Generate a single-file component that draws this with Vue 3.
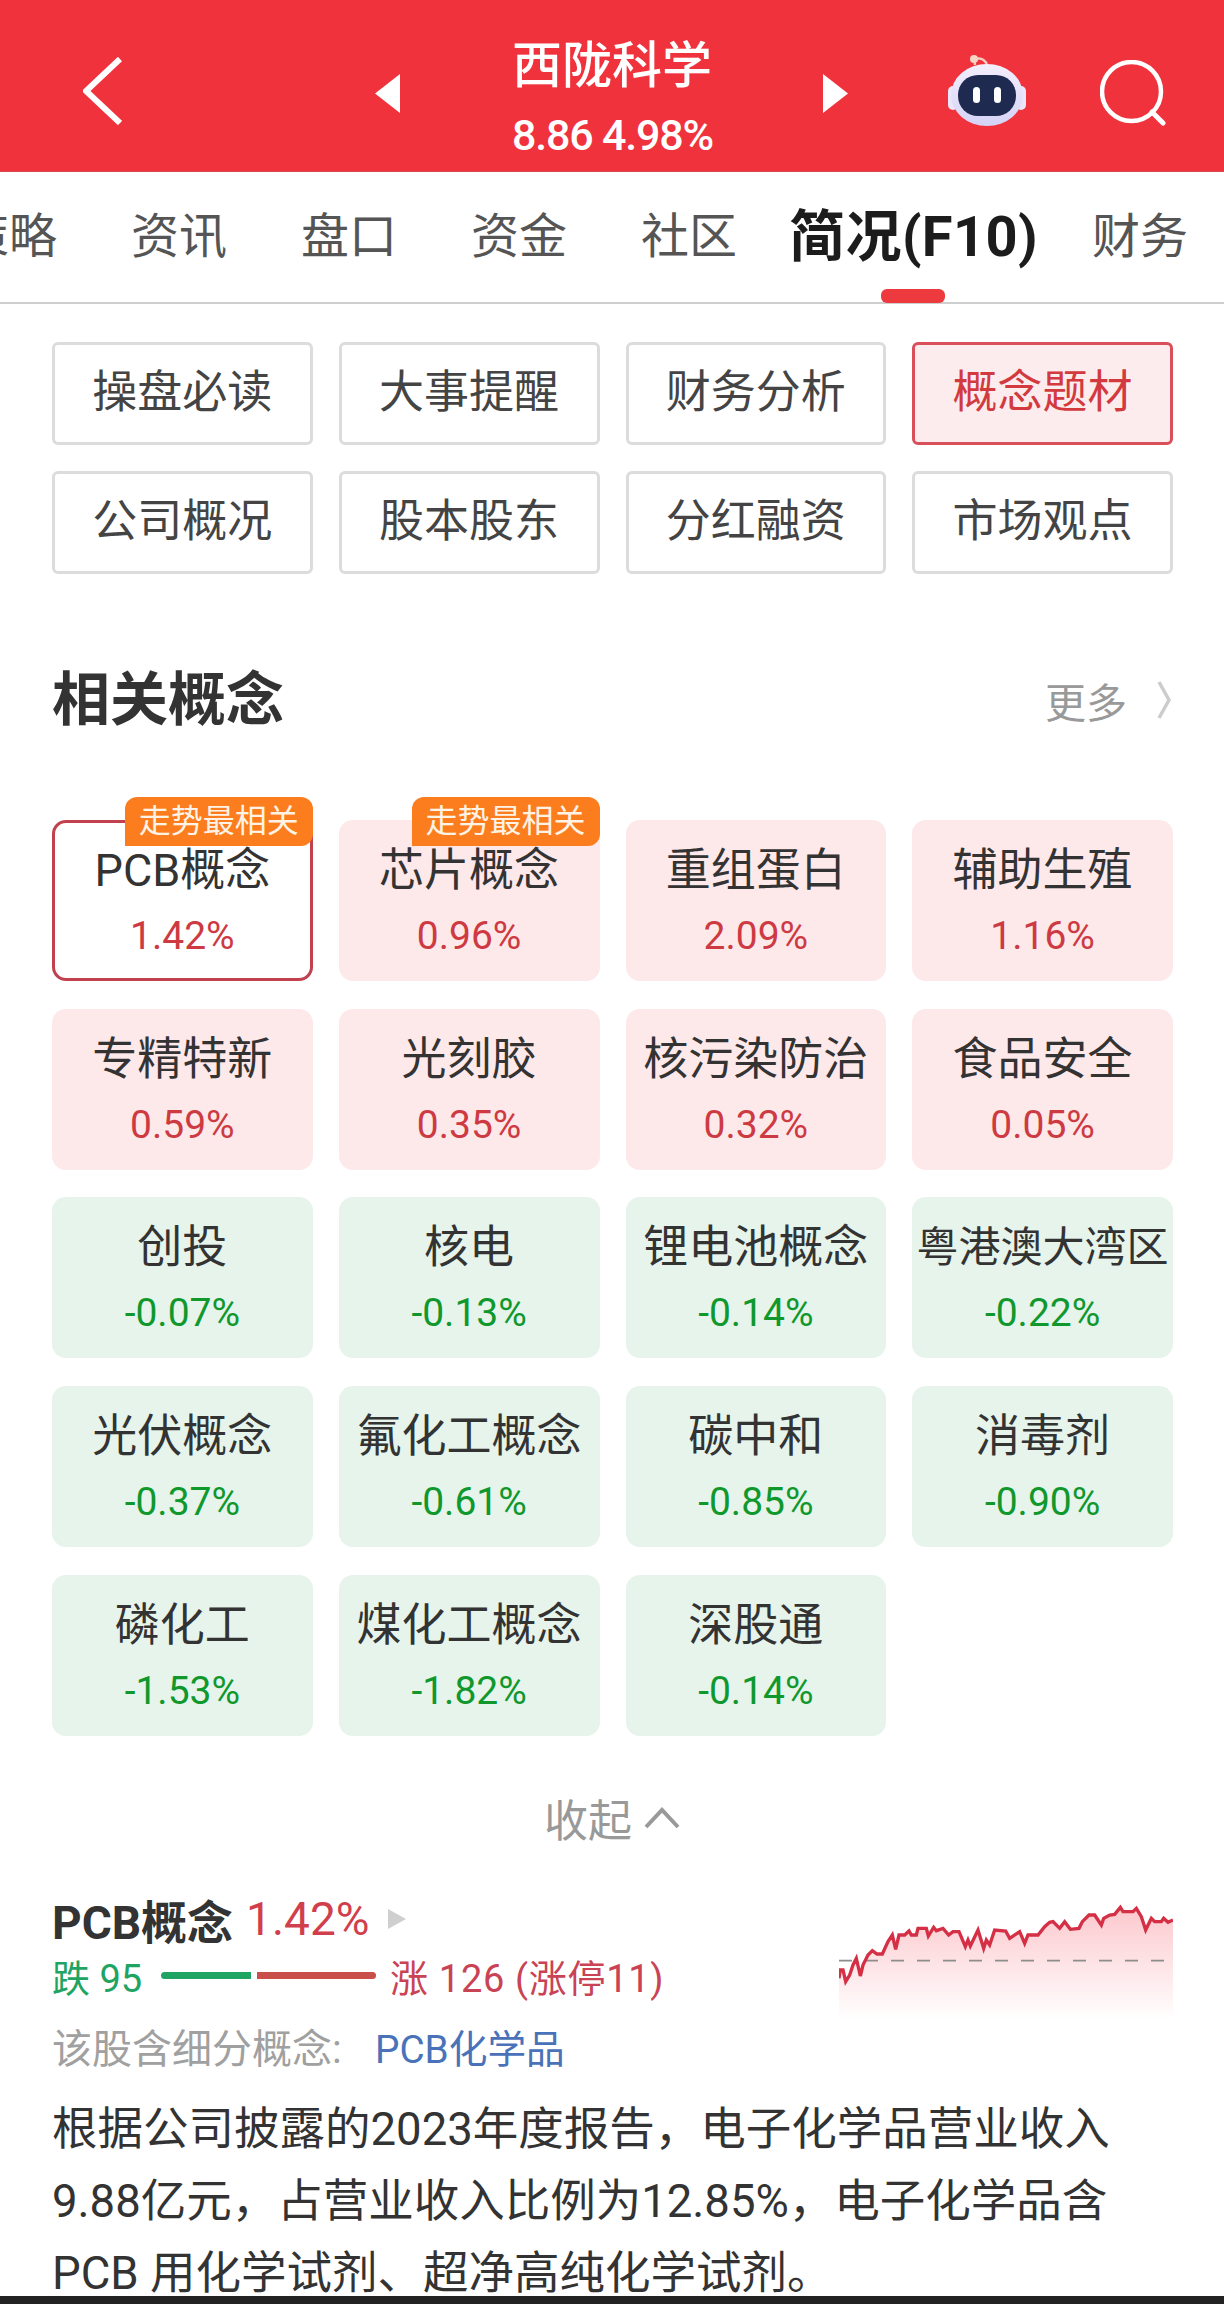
<script setup>
const tabs = ['策略', '资讯', '盘口', '资金', '社区', '简况(F10)', '财务']
const menus = ['操盘必读', '大事提醒', '财务分析', '概念题材', '公司概况', '股本股东', '分红融资', '市场观点']
const concepts = [
  { name: 'PCB概念', pct: '1.42%', badge: true, outlined: true },
  { name: '芯片概念', pct: '0.96%', badge: true },
  { name: '重组蛋白', pct: '2.09%' },
  { name: '辅助生殖', pct: '1.16%' },
  { name: '专精特新', pct: '0.59%' },
  { name: '光刻胶', pct: '0.35%' },
  { name: '核污染防治', pct: '0.32%' },
  { name: '食品安全', pct: '0.05%' },
  { name: '创投', pct: '-0.07%' },
  { name: '核电', pct: '-0.13%' },
  { name: '锂电池概念', pct: '-0.14%' },
  { name: '粤港澳大湾区', pct: '-0.22%', small: true },
  { name: '光伏概念', pct: '-0.37%' },
  { name: '氟化工概念', pct: '-0.61%' },
  { name: '碳中和', pct: '-0.85%' },
  { name: '消毒剂', pct: '-0.90%' },
  { name: '磷化工', pct: '-1.53%' },
  { name: '煤化工概念', pct: '-1.82%' },
  { name: '深股通', pct: '-0.14%' },
]
const line =
  '118,325 122,300 130,300 138,335 150,315 160,285 170,265 182,318 190,285 205,255 218,242 232,252 248,252 265,215 278,195 288,238 298,195 315,195 328,183 335,195 350,195 355,175 380,175 386,198 402,172 410,182 430,175 447,195 460,185 478,185 497,230 505,210 512,228 535,180 552,235 560,210 570,225 585,180 618,183 630,205 660,185 675,220 685,195 715,195 735,170 750,157 760,155 780,175 795,155 812,178 838,175 848,155 868,135 885,135 905,165 912,145 930,135 945,133 962,112 970,125 1000,125 1010,115 1025,140 1038,180 1055,145 1065,155 1085,155 1092,145 1105,157 1120,150'
const area = `${line} 1120,450 118,450`
</script>

<template>
  <div class="page">
    <header class="topbar">
      <svg class="back" width="39" height="68" viewBox="0 0 39 68">
        <path d="M37 2 L3 34 L37 66" fill="none" stroke="#fff" stroke-width="6" />
      </svg>
      <svg class="tri-left" width="25" height="39" viewBox="0 0 25 39"><path d="M25 0V39L0 19.5Z" fill="#fff" /></svg>
      <div class="stock">
        <div class="stock-name">西陇科学</div>
        <div class="stock-price">8.86 4.98%</div>
      </div>
      <svg class="tri-right" width="25" height="39" viewBox="0 0 25 39"><path d="M0 0V39L25 19.5Z" fill="#fff" /></svg>
      <svg class="robot" width="78" height="72" viewBox="0 0 78 72">
        <defs>
          <linearGradient id="shell" x1="0" y1="0" x2="0" y2="1">
            <stop offset="0" stop-color="#f4eefc" />
            <stop offset="1" stop-color="#d5d3f6" />
          </linearGradient>
        </defs>
        <path d="M27 11 C25 3 34 2 39 10" fill="none" stroke="#f7c9c0" stroke-width="2.5" />
        <circle cx="26" cy="5" r="4" fill="#f8d4c4" />
        <rect x="0" y="32" width="10" height="24" rx="5" fill="#ece6fa" />
        <rect x="68" y="32" width="10" height="24" rx="5" fill="#ece6fa" />
        <ellipse cx="39" cy="41" rx="36" ry="31" fill="url(#shell)" />
        <rect x="10" y="21" width="58" height="41" rx="20" fill="#1f2a50" />
        <rect x="25" y="33" width="7" height="16" rx="3.5" fill="#fff" />
        <rect x="46" y="33" width="7" height="16" rx="3.5" fill="#fff" />
      </svg>
      <svg class="search" width="66" height="66" viewBox="0 0 66 66">
        <circle cx="31.5" cy="31.5" r="29.5" fill="none" stroke="#fff" stroke-width="4.5" />
        <path d="M52 52 L63 63" stroke="#fff" stroke-width="5" stroke-linecap="round" />
      </svg>
    </header>

    <nav class="tabs">
      <span v-for="tab in tabs" :key="tab" class="tab" :class="{ active: tab === '简况(F10)' }">{{ tab }}</span>
    </nav>

    <section class="menu">
      <div v-for="m in menus" :key="m" class="menu-btn" :class="{ on: m === '概念题材' }">{{ m }}</div>
    </section>

    <div class="sec-head">
      <h2>相关概念</h2>
      <div class="more">
        <span>更多</span>
        <svg width="14" height="38" viewBox="0 0 14 38"><path d="M2 1 L12 19 L2 37" fill="none" stroke="#cccccc" stroke-width="3.5" /></svg>
      </div>
    </div>

    <section class="grid">
      <div
        v-for="c in concepts"
        :key="c.name"
        class="card"
        :class="[c.pct.startsWith('-') ? 'down' : 'up', { outlined: c.outlined }]"
      >
        <span v-if="c.badge" class="badge">走势最相关</span>
        <div class="card-name" :class="{ small: c.small }">{{ c.name }}</div>
        <div class="card-pct">{{ c.pct }}</div>
      </div>
    </section>

    <div class="collapse">
      <span>收起</span>
      <svg width="36" height="22" viewBox="0 0 36 22"><path d="M2 20 L18 3 L34 20" fill="none" stroke="#999" stroke-width="4" /></svg>
    </div>

    <section class="detail">
      <div class="summary">
        <div class="summary-left">
          <div class="d-title">
            <b>PCB概念</b>
            <span class="d-pct">1.42%</span>
            <svg width="18" height="20" viewBox="0 0 18 20"><path d="M0 0V20L18 10Z" fill="#cfcfcf" /></svg>
          </div>
          <div class="d-stat">
            <span class="fall">跌 95</span>
            <i class="bar green"></i>
            <i class="bar red"></i>
            <span class="rise">涨 126 (涨停11)</span>
          </div>
          <div class="d-sub">
            <span class="sub-label">该股含细分概念:</span>
            <span class="sub-link">PCB化学品</span>
          </div>
        </div>
        <svg class="spark" width="334" height="120" viewBox="118 90 1002 360">
          <defs>
            <linearGradient id="fade" x1="0" y1="0" x2="0" y2="1">
              <stop offset="0" stop-color="#fcc8cd" />
              <stop offset="1" stop-color="#ffffff" />
            </linearGradient>
          </defs>
          <polygon :points="area" fill="url(#fade)" />
          <line x1="118" y1="272" x2="1095" y2="272" stroke="#8d8d8d" stroke-width="5" stroke-dasharray="39 39" />
          <polyline :points="line" fill="none" stroke="#d42f45" stroke-width="10" />
        </svg>
      </div>
      <p class="para">
        根据公司披露的2023年度报告，电子化学品营业收入<br />
        9.88亿元，占营业收入比例为12.85%，电子化学品含<br />
        PCB 用化学试剂、超净高纯化学试剂。
      </p>
    </section>

    <div class="edge"></div>
  </div>
</template>

<style>
html,
body {
  margin: 0;
  background: #fff;
}
</style>

<style scoped>
.page {
  width: 1224px;
  height: 2304px;
  display: flex;
  flex-direction: column;
  overflow: hidden;
  background: #fff;
  font-family: Roboto, "Noto Sans CJK SC", sans-serif;
  color: #333;
}

.topbar {
  flex: none;
  height: 172px;
  background: #f0323c;
  display: flex;
  align-items: center;
  color: #fff;
  border-bottom: 1px solid #d9484e;
  box-sizing: border-box;
}

.back {
  margin: 11px 0 0 83px;
}

.tri-left {
  margin: 16px 0 0 253px;
}

.stock {
  align-self: flex-start;
  width: 200px;
  margin: 36px 111px 0 112px;
  text-align: center;
  white-space: nowrap;
}

.stock-name {
  font-size: 50px;
  font-weight: 500;
  line-height: 60px;
}

.stock-price {
  font-size: 43px;
  font-weight: 500;
  letter-spacing: -1.2px;
  line-height: 50px;
  margin-top: 14px;
}

.tri-right {
  margin: 16px 0 0 0;
}

.robot {
  margin: 8px 0 0 100px;
}

.search {
  margin: 14px 0 0 74px;
}

.tabs {
  flex: none;
  height: 132px;
  box-sizing: border-box;
  border-bottom: 2px solid #cfcfcf;
  display: flex;
  align-items: center;
  gap: 74px;
  margin-left: -39px;
  width: 1263px;
  white-space: nowrap;
}

.tab {
  font-size: 48px;
  color: #555;
  line-height: 60px;
}

.tab.active {
  position: relative;
  width: 252px;
  font-size: 56px;
  font-weight: 700;
  letter-spacing: 0.4px;
  color: #1c1c1c;
  margin: 0 -23px 0 -22px;
}

.tab.active::after {
  content: "";
  position: absolute;
  left: 92px;
  top: 82px;
  width: 64px;
  height: 14px;
  border-radius: 6px;
  background: #ec3a3f;
}

.menu {
  flex: none;
  display: grid;
  grid-template-columns: repeat(4, 1fr);
  gap: 26px;
  margin: 38px 51px 0 52px;
}

.menu-btn {
  height: 103px;
  box-sizing: border-box;
  border: 3px solid #dcdcdc;
  border-radius: 6px;
  padding-bottom: 10px;
  display: flex;
  align-items: center;
  justify-content: center;
  font-size: 45px;
  color: #444;
}

.menu-btn.on {
  background: #fdeced;
  border-color: #d9505a;
  color: #d23a40;
}

.sec-head {
  flex: none;
  display: flex;
  align-items: center;
  justify-content: space-between;
  height: 80px;
  margin: 86px 53px 0 52px;
}

.sec-head h2 {
  margin: 0;
  font-size: 58px;
  font-weight: 700;
  line-height: 80px;
  color: #333;
}

.more {
  display: flex;
  align-items: center;
  gap: 30px;
  font-size: 41px;
  color: #999;
}

.grid {
  flex: none;
  display: grid;
  grid-template-columns: repeat(4, 1fr);
  column-gap: 26px;
  row-gap: 27.7px;
  margin: 80px 51px 0 52px;
}

.card {
  position: relative;
  height: 161px;
  box-sizing: border-box;
  border: 3px solid transparent;
  border-radius: 14px;
  padding-top: 20px;
  text-align: center;
}

.card.up {
  background: #fde8ea;
  color: #cd3a42;
}

.card.down {
  background: #e6f4ec;
  color: #10982c;
}

.card.outlined {
  background: #fff;
  border-color: #c2414f;
}

.badge {
  position: absolute;
  top: -26px;
  right: -3px;
  width: 188px;
  height: 49px;
  border-radius: 12px 12px 12px 0;
  background: #fb7d1e;
  color: #fff3e6;
  font-size: 32px;
  line-height: 49px;
  text-align: center;
}

.card-name {
  font-size: 45px;
  line-height: 56px;
  color: #333;
  white-space: nowrap;
}

.card-name.small {
  font-size: 42px;
}

.card-pct {
  font-size: 39px;
  line-height: 48px;
  margin-top: 13px;
}

.collapse {
  flex: none;
  height: 60px;
  margin-top: 52px;
  display: flex;
  align-items: center;
  justify-content: center;
  gap: 12px;
  font-size: 44px;
  color: #999;
}

.detail {
  flex: 1;
  min-height: 0;
  overflow: hidden;
  margin: 41px 51px 0 52px;
}

.summary {
  display: flex;
  justify-content: space-between;
  align-items: flex-start;
}

.d-title {
  display: flex;
  align-items: center;
  height: 60px;
  font-size: 46px;
}

.d-title b {
  color: #333;
  font-weight: 700;
}

.d-pct {
  margin-left: 13px;
  color: #d23f4c;
}

.d-title svg {
  margin-left: 18px;
}

.d-stat {
  display: flex;
  align-items: center;
  height: 54px;
  font-size: 38px;
}

.fall {
  color: #1fa463;
  width: 109px;
}

.rise {
  color: #c94355;
  margin-left: 14px;
  letter-spacing: 0.7px;
}

.bar {
  display: block;
  height: 7px;
}

.bar.green {
  width: 90px;
  background: #1fa463;
  border-radius: 4px 0 0 4px;
}

.bar.red {
  width: 119px;
  margin-left: 6px;
  background: #c94f4a;
  border-radius: 0 4px 4px 0;
}

.d-sub {
  display: flex;
  margin-top: 22px;
  height: 50px;
  line-height: 50px;
  font-size: 38.7px;
}

.sub-label {
  width: 323px;
  font-size: 40px;
  color: #a0a0a0;
}

.sub-link {
  color: #4a72b8;
}

.spark {
  margin: 11px 0 0 0;
  flex: none;
}

.para {
  margin: 19px 0 0 0;
  font-size: 45.5px;
  line-height: 72px;
  color: #333;
  white-space: nowrap;
}

.edge {
  flex: none;
  height: 8px;
  background: #222;
}
</style>
